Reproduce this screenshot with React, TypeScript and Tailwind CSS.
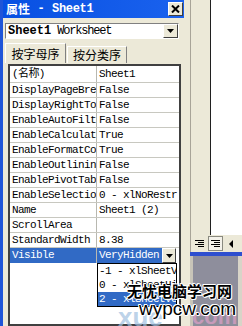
import React from "react";

const mono = "font-['Liberation_Mono','Noto_Sans_CJK_SC',monospace] text-[11px] tracking-[-0.6px] leading-none";

const rows: [string, string][] = [
  ["DisplayPageBre", "False"],
  ["DisplayRightTo", "False"],
  ["EnableAutoFilt", "False"],
  ["EnableCalculat", "True"],
  ["EnableFormatCo", "True"],
  ["EnableOutlinin", "False"],
  ["EnablePivotTab", "False"],
  ["EnableSelectio", "0 - xlNoRestr"],
  ["Name", "Sheet1 (2)"],
  ["ScrollArea", ""],
  ["StandardWidth", "8.38"],
];

function Row({ name, value, h = "h-[15px]" }: { name: string; value: string; h?: string }) {
  return (
    <div className={`flex ${h} border-b border-[#c8c8c0] shrink-0`}>
      <div className={`w-[86px] shrink-0 overflow-hidden whitespace-nowrap pl-[2px] flex items-center ${mono} text-black`}>{name}</div>
      <div className="w-px bg-[#b8b8b0] shrink-0" />
      <div className={`flex-1 overflow-hidden whitespace-nowrap pl-[2px] flex items-center ${mono} text-black`}>{value}</div>
    </div>
  );
}

export default function App() {
  return (
    <div className="relative w-[242px] h-[326px] overflow-hidden flex bg-white">
      {/* Properties window */}
      <div className="w-[190px] h-full flex flex-col bg-[#ece9d8] border-l-[3px] border-[#1f55d8] shrink-0">
        {/* title bar */}
        <div className="h-[18px] w-[181px] flex items-center justify-between bg-gradient-to-r from-[#0750e2] to-[#1a62ee] shrink-0">
          <div className="pl-[3px] flex items-center text-white font-bold leading-none whitespace-nowrap">
            <span className="text-[12px] font-['Noto_Sans_CJK_SC',sans-serif]">属性</span>
            <span className="w-[22px] text-center text-[12px] font-['Liberation_Mono',monospace]">-</span>
            <span className="text-[12px] font-['Liberation_Mono',monospace] tracking-[-0.3px]">Sheet1</span>
          </div>
          <div className="mr-[1px] w-[15px] h-[14px] bg-[#ece9d8] border border-t-white border-l-white border-r-[#404040] border-b-[#404040] flex items-center justify-center">
            <svg width="9" height="8" viewBox="0 0 9 8">
              <path d="M1 0.5 L8 7.5 M8 0.5 L1 7.5" stroke="#000" strokeWidth="2" />
            </svg>
          </div>
        </div>
        {/* object combo */}
        <div className="mt-[5px] ml-[2px] w-[174px] h-[16px] bg-white border border-t-[#808080] border-l-[#808080] border-r-white border-b-white flex shrink-0">
          <div className="flex-1 flex items-center pl-[2px] whitespace-nowrap overflow-hidden font-['Liberation_Mono',monospace] text-[12px] leading-none text-black">
            <span className="font-bold">Sheet1</span>
            <span className="tracking-[-1.2px]">&nbsp;Worksheet</span>
          </div>
          <div className="w-[15px] h-full bg-[#ece9d8] border border-t-white border-l-white border-r-[#404040] border-b-[#404040] flex items-center justify-center">
            <svg width="7" height="4" viewBox="0 0 7 4"><path d="M0 0 H7 L3.5 4 Z" fill="#000" /></svg>
          </div>
        </div>
        {/* tabs */}
        <div className="mt-[4px] ml-[2px] flex items-end h-[20px] shrink-0">
          <div className="w-[61px] h-[20px] border-t border-l border-r border-t-white border-l-white border-r-[#808080] bg-[#ece9d8] flex items-center justify-center text-[12px] leading-none font-['Noto_Sans_CJK_SC',sans-serif] text-black">按字母序</div>
          <div className="ml-[1px] w-[60px] h-[17px] border-t border-l border-r border-t-white border-l-white border-r-[#808080] flex items-center justify-center text-[12px] leading-none font-['Noto_Sans_CJK_SC',sans-serif] text-black">按分类序</div>
        </div>
        {/* grid */}
        <div className="mt-[1px] ml-[5px] w-[173px] flex-1 bg-white border-[2px] border-[#404040] flex flex-col overflow-hidden">
          <Row name="(名称)" value="Sheet1" h="h-[17px]" />
          {rows.map(([n, v]) => (
            <Row key={n} name={n} value={v} />
          ))}
          <div className="flex h-[15px] shrink-0">
            <div className={`w-[86px] shrink-0 bg-[#316ac5] text-white pl-[2px] flex items-center ${mono}`}>Visible</div>
            <div className="w-px bg-[#b8b8b0] shrink-0" />
            <div className="flex-1 flex items-stretch overflow-hidden">
              <div className={`w-[65px] pl-[2px] bg-[#316ac5] text-white flex items-center whitespace-nowrap overflow-hidden ${mono}`}>VeryHidden</div>
              <div className="w-[14px] bg-[#ece9d8] border border-t-white border-l-white border-r-[#404040] border-b-[#404040] flex items-center justify-center">
                <svg width="7" height="4" viewBox="0 0 7 4"><path d="M0 0 H7 L3.5 4 Z" fill="#000" /></svg>
              </div>
            </div>
          </div>
          <div className="flex-1" />
        </div>
      </div>

      {/* Right: excel area */}
      <div className="flex-1 flex flex-col">
        <div className="h-[235px] flex shrink-0">
          <div className="w-px bg-[#a8a498]" />
          <div className="w-[19px] bg-[#ece9d8]" />
          <div className="w-px bg-[#202020]" />
          <div className="flex-1 bg-white" />
        </div>
        <div className="h-[17px] flex items-center bg-[#ece9d8] border-l border-[#a8a498] gap-[2px] pl-[2px] shrink-0">
          <div className="w-[13px] h-[13px] flex items-center justify-center">
            <svg width="9" height="8" viewBox="0 0 9 8"><path d="M0 0.5H9M3 2.5H9M0 4.5H9M3 6.5H9" stroke="#000" /></svg>
          </div>
          <div className="w-[15px] h-[15px] bg-[#f4f2ea] border border-[#8a8a80] flex items-center justify-center">
            <svg width="9" height="8" viewBox="0 0 9 8"><path d="M0 0.5H9M3 2.5H9M0 4.5H9M3 6.5H9" stroke="#000" /></svg>
          </div>
          <div className="w-[13px] h-[13px] flex items-center justify-center">
            <svg width="5" height="8" viewBox="0 0 5 8"><path d="M4 0 V8 L0 4 Z" fill="#000" /></svg>
          </div>
        </div>
        <div className="h-[4px] bg-[#2e4fcf] shrink-0" />
        <div className="flex-1 flex">
          <div className="w-[3px] bg-[#c8c4b8]" />
          <div className="flex-1 bg-[#8e8e9c]" />
          <div className="w-[4px] bg-[#d8d4c8]" />
        </div>
      </div>

      {/* dropdown list */}
      <div className="absolute left-[97px] top-[263px] w-[80px] h-[44px] bg-white border border-black flex flex-col overflow-hidden">
        <div className={`h-[14px] pl-[1px] flex items-center whitespace-nowrap ${mono} text-black`}>-1 - xlSheetV</div>
        <div className={`h-[14px] pl-[1px] flex items-center whitespace-nowrap ${mono} text-black`}>0 - xlSheetHi</div>
        <div className={`h-[14px] pl-[1px] flex items-center whitespace-nowrap bg-[#316ac5] text-white ${mono}`}>2 - xlSheetVe</div>
      </div>

      {/* watermark */}
      <div className="absolute left-[118px] top-[304px] text-[26px] leading-none font-bold font-['Liberation_Sans',sans-serif] text-[#9fbfe0]/70 whitespace-nowrap">xue</div>
      <div className="absolute left-[192px] top-[306px] text-[22px] leading-none font-bold font-['Liberation_Sans',sans-serif] text-[#e0a0c8]/70 whitespace-nowrap">com</div>
      <div className="absolute left-[127px] top-[283px] text-[15px] leading-none font-bold font-['Noto_Sans_CJK_SC',sans-serif] text-black whitespace-nowrap [text-shadow:1px_0_#fff,-1px_0_#fff,0_1px_#fff,0_-1px_#fff,1px_1px_#fff,-1px_-1px_#fff]">无忧电脑学习网</div>
      <div className="absolute left-[139px] top-[299px] text-[19px] leading-none font-['Liberation_Sans',sans-serif] text-black whitespace-nowrap [text-shadow:1px_0_#fff,-1px_0_#fff,0_1px_#fff,0_-1px_#fff,1px_1px_#fff,-1px_-1px_#fff]">wypcw.com</div>
    </div>
  );
}
